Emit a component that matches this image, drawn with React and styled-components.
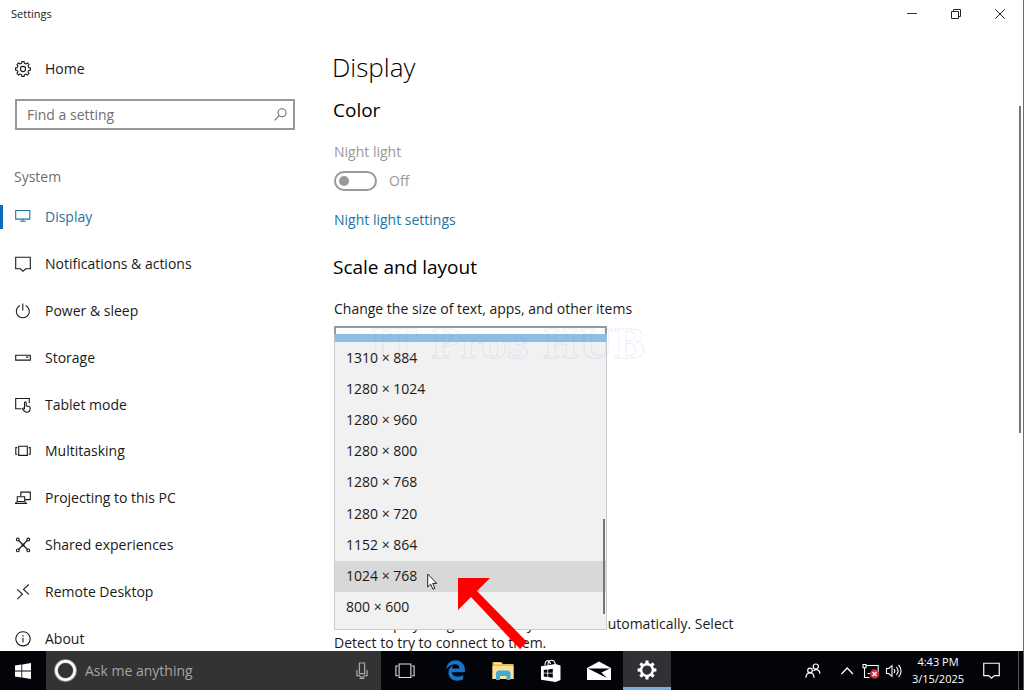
import React, { Fragment, useState } from 'react';
import styled, { createGlobalStyle } from 'styled-components';
import { FaEdgeLegacy } from 'react-icons/fa6';

const GlobalStyle = createGlobalStyle`
  * {
    box-sizing: border-box;
  }
  body {
    margin: 0;
    background-color: white;
    color: #1a1a1a;
    font-family: 'Open Sans', 'Noto Sans', sans-serif;
    font-size: 14px;
    line-height: 20px;
  }
  button, input, select {
    font: inherit;
    color: inherit;
  }
`
const Screen = styled.div`
  display: flex;
  flex-direction: column;
  height: 100vh;
  overflow: hidden;
`
const Window = styled.div`
  border-right: 1px solid #6e6e6e;
  display: flex;
  flex: 1;
  flex-direction: column;
  min-height: 0;
`
const TitleBar = styled.header`
  align-items: center;
  display: flex;
  flex: none;
  font-size: 11px;
  height: 28px;
  justify-content: space-between;
  padding: 0 1px 0 11px;
`
const WindowButtons = styled.div`
  display: flex;
  height: 100%;
`
const WindowButton = styled.button`
  background: none;
  border: none;
  display: grid;
  padding: 0;
  place-items: center;
  width: 44px;
`
const Body = styled.div`
  display: flex;
  flex: 1;
  min-height: 0;
`
const Sidebar = styled.aside`
  flex: none;
  overflow: hidden;
  padding-top: 17px;
  width: 310px;
`
const NavLink = styled.a`
  align-items: center;
  border-left: 3px solid transparent;
  color: ${props => props.$active ? '#24739f' : '#1a1a1a'};
  display: flex;
  gap: 14px;
  height: 47px;
  padding-left: 12px;
  position: relative;
  text-decoration: none;

  &::before {
    background-color: ${props => props.$active ? '#0f6cbd' : 'transparent'};
    content: '';
    height: 24px;
    left: -3px;
    position: absolute;
    width: 3px;
  }
`
const SearchBox = styled.label`
  align-items: center;
  border: 2px solid #999;
  color: #707070;
  display: flex;
  height: 31px;
  margin: 7px 15px 0;
  padding: 0 6px 0 10px;
`
const SearchInput = styled.input`
  background: none;
  border: none;
  flex: 1;
  min-width: 0;
  outline: none;
  padding: 0;

  &::placeholder {
    color: #707070;
    opacity: 1;
  }
`
const NavTitle = styled.h2`
  color: #707070;
  font-size: 14px;
  font-weight: 400;
  margin: 37px 0 7px 14px;
`
const NavList = styled.nav`
  display: grid;
  grid-template-rows: repeat(10, 1fr);
  height: 468px;

  ${NavLink} {
    height: auto;
  }
`
const Main = styled.main`
  flex: 1;
  min-width: 0;
  overflow: hidden;
  padding: 21px 0 0 24px;
`
const PageTitle = styled.h1`
  color: black;
  font-size: 26px;
  font-weight: 300;
  line-height: 36px;
  margin: 0 0 13px -2px;
`
const SectionTitle = styled.h2`
  color: black;
  font-size: 19px;
  font-weight: 400;
  line-height: 24px;
  margin: 0 0 20px -1px;
`
const Muted = styled.div`
  color: #999;
`
const ToggleRow = styled.label`
  align-items: center;
  color: #999;
  display: flex;
  gap: 12px;
  margin: 9px 0 19px;
`
const Toggle = styled.input`
  appearance: none;
  border: 2px solid #999;
  border-radius: 10px;
  display: flex;
  align-items: center;
  height: 20px;
  margin: 0;
  padding: 0 3px;
  width: 43px;

  &::before {
    background-color: #999;
    border-radius: 50%;
    content: '';
    height: 10px;
    width: 10px;
  }
`
const TextLink = styled.a`
  color: #24739f;
  display: block;
  margin-bottom: 25px;
  text-decoration: none;
`
const Field = styled.div`
  position: relative;
`
const FieldLabel = styled.label`
  display: block;
  margin-bottom: 7px;
`
const ScaleSelect = styled.select`
  appearance: none;
  background-color: white;
  border: 2px solid #999;
  border-radius: 0;
  display: block;
  height: 32px;
  width: 273px;
`
const Popup = styled.div`
  background-color: #f1f1f1;
  border: 1px solid #ccc;
  border-top: 8px solid #8ebee4;
  height: 296px;
  left: 0;
  position: absolute;
  top: 8px;
  width: 273px;
`
const Options = styled.div`
  display: grid;
  grid-template-rows: repeat(9, 1fr);
  height: 281px;
`
const Option = styled.button`
  background-color: ${props => props.$hover ? '#d8d8d8' : 'transparent'};
  border: none;
  padding: 0 11px;
  text-align: left;
`
const PopupScroll = styled.div`
  background-color: #777;
  bottom: 15px;
  height: 95px;
  position: absolute;
  right: 1px;
  width: 2px;
`
const Watermark = styled.div`
  color: transparent;
  font-family: 'DejaVu Serif', serif;
  font-size: 39px;
  font-weight: 700;
  left: 35px;
  line-height: 40px;
  pointer-events: none;
  position: absolute;
  top: -18px;
  white-space: nowrap;
  -webkit-text-stroke: 1px rgba(110, 110, 255, 0.14);
`
const Pointer = styled.svg`
  left: 92px;
  position: absolute;
  top: 231px;
`
const Arrow = styled.svg`
  left: 123px;
  position: absolute;
  top: 236px;
`
const Hint = styled.p`
  line-height: 19px;
  margin: 256px 0 0;
  max-width: 410px;
`
const PageScroll = styled.div`
  background-color: #777;
  flex: none;
  height: 327px;
  margin: 78px 2px 0 0;
  width: 2px;
`
const Taskbar = styled.footer`
  background-color: #02040a;
  color: white;
  display: flex;
  flex: none;
  height: 39px;
`
const TaskButton = styled.button`
  background-color: ${props => props.$active ? '#303137' : 'transparent'};
  border: none;
  border-bottom: ${props => props.$active ? '3px solid #76aee0' : 'none'};
  display: grid;
  flex: none;
  margin-right: ${props => props.$gap || 0}px;
  padding: ${props => props.$active ? '2px 0 0' : 0};
  place-items: center;
  width: ${props => props.$width || 48}px;
`
const CortanaBox = styled.label`
  align-items: center;
  background-color: #333;
  color: #a5a5a5;
  display: flex;
  flex: 0 1 335px;
  gap: 8px;
  padding: 0 11px 0 8px;

  ${SearchInput}::placeholder {
    color: #a5a5a5;
  }
`
const Tray = styled.div`
  display: flex;
  margin-left: auto;
`
const Clock = styled.time`
  font-size: 11px;
  line-height: 17px;
  padding-top: 2px;
  text-align: center;
  width: 64px;
`
const ShowDesktop = styled.div`
  border-left: 1px solid #555;
  border-right: 1px solid #555;
  margin-left: 6px;
  width: 6px;
`

// outline of a cog, alternating between the two radii for every tooth
const gearPath = (teeth, outer, inner) => {
  const step = (Math.PI * 2) / teeth;
  const points = [];
  for (let i = 0; i < teeth; i++) {
    const a = i * step - Math.PI / 2;
    [[-0.3, inner], [-0.2, outer], [0.2, outer], [0.3, inner]].forEach(([offset, r]) => {
      const t = a + offset * step;
      points.push(`${(8 + r * Math.cos(t)).toFixed(2)} ${(8 + r * Math.sin(t)).toFixed(2)}`);
    });
  }
  return `M${points.join('L')}Z`;
}

const Icon = ({ size = 16, children, width = 1.1 }) => (
  <svg
    width={size}
    height={size}
    viewBox="0 0 16 16"
    fill="none"
    stroke="currentColor"
    strokeWidth={width}
    aria-hidden="true"
  >
    {children}
  </svg>
)

const icons = {
  home: <Fragment><path d={gearPath(8, 7.5, 5.9)} strokeLinejoin="round" /><circle cx="8" cy="8" r="2.6" /></Fragment>,
  display: <path d="M.7 1.500h14.100v8.600H.7zM7.800 10v2M5 12.200h5.800" />,
  notifications: <path d="M.7 1.200h14.600v11.600h-4.600L8 15.200l-2.600-2.400H.7z" />,
  power: <path d="M7.800.5v7M4.900 2.400a6.500 6.500 0 1 0 5.800 0" />,
  storage: <path d="M.7 5.200h14.600v4.900H.7zM11 7.100h2.400" />,
  tablet: <Fragment><path d="M6.500 11.700H.7V1.500h13.600v4.700" /><path d="M9.500 11.500V5.800c0-1.400 1.700-1.400 1.700 0v3.100l2.900.6c.9.3 1.200.8 1.100 1.700-.1 2.300-1.300 4-3.300 4-2.100 0-3.200-1.200-4.400-3.500.5-1 1.300-.9 2-.2z" /></Fragment>,
  multitasking: <path d="M3.700 3.300h8.600v9.100H3.700zM2.300 4.600H.8v6.600h1.500M13.700 4.600h1.500v6.600h-1.500" />,
  projecting: <path d="M5.800 6V2.100h9.500v7.500h-5M2.300 6.800h7.400v4.800H2.300zM.4 13.500l1.600-1.800h7.900l1.500 1.800z" />,
  shared: <Fragment><path d="M3.800 3.500l8.700 9M12.300 3.500l-8.700 9" /><circle cx="2.800" cy="2.500" r="1.400" /><circle cx="13.300" cy="2.500" r="1.400" /><circle cx="2.800" cy="13.400" r="1.400" /><circle cx="13.300" cy="13.400" r="1.400" /><circle cx="8" cy="8" r="1" fill="currentColor" /></Fragment>,
  remote: <path d="M2.200 5.300l5.200 4.800-5 5M13.700.5L8.500 5.400l5.400 5" />,
  about: <path d="M8 .7a7.100 7.100 0 1 0 .01 0zM8 6.800v4.800M8 4.100v1.300" />,
}

const navItems = [
  ['display', 'Display'],
  ['notifications', 'Notifications & actions'],
  ['power', 'Power & sleep'],
  ['storage', 'Storage'],
  ['tablet', 'Tablet mode'],
  ['multitasking', 'Multitasking'],
  ['projecting', 'Projecting to this PC'],
  ['shared', 'Shared experiences'],
  ['remote', 'Remote Desktop'],
  ['about', 'About'],
];

const resolutions = [
  '1310 × 884',
  '1280 × 1024',
  '1280 × 960',
  '1280 × 800',
  '1280 × 768',
  '1280 × 720',
  '1152 × 864',
  '1024 × 768',
  '800 × 600',
];

const SettingsTaskbar = () => (
  <Taskbar>
    <TaskButton $width={46} aria-label="Start">
      <svg width="16" height="16" viewBox="0 0 16 16" fill="white">
        <path d="M0 2.400L6.400 1.500v6H0zM7.200 1.400L16 0v7.500H7.200zM0 8.400h6.400v6L0 13.500zM7.200 8.400H16V16l-8.800-1.400z" />
      </svg>
    </TaskButton>
    <CortanaBox>
      <svg width="23" height="23" viewBox="0 0 23 23" fill="none">
        <circle cx="11.500" cy="11.500" r="9.400" stroke="#aaa" strokeWidth="3.800" />
        <circle cx="11.500" cy="11.500" r="9.200" stroke="white" strokeWidth="2.400" />
      </svg>
      <SearchInput type="text" aria-label="Search" placeholder="Ask me anything" />
      <svg width="16" height="18" viewBox="0 0 16 18" fill="none" stroke="#aaa" strokeWidth="1.200">
        <path d="M5.400 1h5.200v10.700H5.400zM2.900 8v5.600h2.500l1.300 1.500h2.600l1.300-1.500h2.500V8M5.500 16.500h5" />
      </svg>
    </CortanaBox>
    <TaskButton $gap={2} aria-label="Task view">
      <svg width="20" height="18" viewBox="0 0 20 18" fill="none" stroke="#ddd" strokeWidth="1.100">
        <path d="M4.100 2h11.800v13.500H4.100zM3 4H.9v9.800H3M17 4h2.100v9.800H17" />
      </svg>
    </TaskButton>
    <TaskButton aria-label="Edge"><FaEdgeLegacy size={21} color="#1673c8" /></TaskButton>
    <TaskButton aria-label="File Explorer">
      <svg width="22" height="20" viewBox="0 0 22 20">
        <path d="M.5 1h9l1.500 2h10.500v15H.5z" fill="#e9bd50" />
        <path d="M.5 5h21v13H.5z" fill="#fbe29a" />
        <path d="M2.500 2h6v1.200h-6z" fill="#fff2c4" />
        <path d="M4 19v-7.500L6 9.500h10.500l2 2V19h-4v-4h-6.500v4z" fill="#44a9cf" />
      </svg>
    </TaskButton>
    <TaskButton aria-label="Store">
      <svg width="22" height="24" viewBox="0 0 22 24">
        <path d="M5 6.500C5 .5 9 .2 10.500 5M8 6c0-6 6.500-6.500 7.500 0" fill="none" stroke="white" strokeWidth="1.100" />
        <path d="M1 7.200L15.500 5v18L1 20.800zM15.500 5l5 1.500V21l-5 2z" fill="white" />
        <path d="M3.800 11l3.600-.5v3.300H3.800zM8.200 10.400l4.600-.7v4.100H8.200zM3.800 14.600h3.600v3.300l-3.600-.5zM8.200 14.600h4.600v4.200l-4.600-.7z" fill="#02040a" />
      </svg>
    </TaskButton>
    <TaskButton aria-label="Mail">
      <svg width="24" height="20" viewBox="0 0 24 20">
        <path d="M0 7L12 .5 24 7v12H0z" fill="white" />
        <path d="M1 7.500h22l-8.600 4L20 17 1 7.500z" fill="#02040a" />
      </svg>
    </TaskButton>
    <TaskButton $active aria-label="Settings">
      <svg width="20" height="20" viewBox="0 0 16 16">
        <path d={`${gearPath(8, 7.6, 5.7)}M8 4.300a3.700 3.700 0 1 0 .01 0z`} fill="white" fillRule="evenodd" />
      </svg>
    </TaskButton>
    <Tray>
      <TaskButton $width={28} $gap={9} aria-label="People">
        <Icon width={1.2}>
          <circle cx="10.800" cy="3.600" r="2.600" />
          <circle cx="5" cy="7.400" r="2.300" />
          <path d="M1 14.800c0-6.600 8-6.600 8 0M8.500 7.800c2.700-2.600 6.500-.8 6.500 3" />
        </Icon>
      </TaskButton>
      <TaskButton $width={22} $gap={2} aria-label="Show hidden icons">
        <Icon width={1.3}><path d="M2.500 11L8.200 5l5.700 6" /></Icon>
      </TaskButton>
      <TaskButton $width={22} $gap={1} aria-label="Network">
        <svg width="18" height="16" viewBox="0 0 18 16" fill="none" stroke="white" strokeWidth="1.100">
          <path d="M4.500 2.500h11.700v8H5.500M1 1.500h3v3.300H1zM2.500 5v9.500h5" />
          <circle cx="12.500" cy="11" r="4.700" fill="#cf2f3c" stroke="none" />
          <path d="M10.500 9l4 4M14.500 9l-4 4" strokeWidth="1.400" />
        </svg>
      </TaskButton>
      <TaskButton $width={22} $gap={1} aria-label="Volume">
        <svg width="18" height="16" viewBox="0 0 18 16" fill="none" stroke="white" strokeWidth="1.100">
          <path d="M1.500 5.500h2.300L7 2.700v10.600l-3.200-2.800H1.500zM9 6c1 1.200 1 2.800 0 4M11.300 4c2.200 2.400 2.200 5.600 0 8M13.600 2c3.300 3.500 3.300 8.500 0 12" />
        </svg>
      </TaskButton>
      <Clock>4:43 PM<br />3/15/2025</Clock>
      <TaskButton $width={42} aria-label="Action center"><Icon size={17}>{icons.notifications}</Icon></TaskButton>
      <ShowDesktop />
    </Tray>
  </Taskbar>
)

const App = () => {
  const [hovered, setHovered] = useState('1024 × 768');

  return (
    <Screen>
      <GlobalStyle />
      <Window>
        <TitleBar>
          <span>Settings</span>
          <WindowButtons>
            <WindowButton aria-label="Minimize">
              <svg width="10" height="10" viewBox="0 0 10 10" stroke="#333"><path d="M0 4.500h10" /></svg>
            </WindowButton>
            <WindowButton aria-label="Restore">
              <svg width="10" height="10" viewBox="0 0 10 10" fill="none" stroke="#222"><path d="M.5 2.500h7v7h-7zM2.500 2V.5h7v7H8" /></svg>
            </WindowButton>
            <WindowButton aria-label="Close">
              <svg width="10" height="10" viewBox="0 0 10 10" stroke="#222"><path d="M.3.3l9.400 9.400M9.700.3L.3 9.700" /></svg>
            </WindowButton>
          </WindowButtons>
        </TitleBar>
        <Body>
          <Sidebar>
            <NavLink href="#home"><Icon>{icons.home}</Icon>Home</NavLink>
            <SearchBox>
              <SearchInput type="text" aria-label="Find a setting" placeholder="Find a setting" />
              <svg width="13" height="13" viewBox="0 0 13 13" fill="none" stroke="currentColor" strokeWidth="1.100">
                <circle cx="8" cy="4.800" r="4" />
                <path d="M5.200 7.700L.5 12.400" />
              </svg>
            </SearchBox>
            <NavTitle>System</NavTitle>
            <NavList>
              { navItems.map(([id, label]) => (
                <NavLink key={id} href={`#${id}`} $active={id === 'display'}>
                  <Icon>{icons[id]}</Icon>
                  {label}
                </NavLink>
              )) }
            </NavList>
          </Sidebar>
          <Main>
            <PageTitle>Display</PageTitle>
            <SectionTitle>Color</SectionTitle>
            <Muted>Night light</Muted>
            <ToggleRow>
              <Toggle type="checkbox" role="switch" disabled />
              Off
            </ToggleRow>
            <TextLink href="#night-light">Night light settings</TextLink>
            <SectionTitle>Scale and layout</SectionTitle>
            <FieldLabel htmlFor="scale">Change the size of text, apps, and other items</FieldLabel>
            <Field>
              <ScaleSelect id="scale" />
              <Popup>
                <Options role="listbox" aria-label="Resolution">
                  { resolutions.map(item => (
                    <Option
                      key={item}
                      role="option"
                      aria-selected={item === hovered}
                      $hover={item === hovered}
                      onMouseEnter={() => setHovered(item)}
                    >
                      {item}
                    </Option>
                  )) }
                </Options>
                <PopupScroll />
                <Watermark>IT Pros HUB</Watermark>
                <Pointer width="11" height="18" viewBox="0 0 11 18">
                  <path d="M.7 1v13l3-2.800 2.200 5 2-.9-2.200-4.900h4.100z" fill="white" stroke="#222" strokeWidth="1" />
                </Pointer>
                <Arrow width="69" height="71" viewBox="0 0 69 71">
                  <path d="M0 0h32L19 13l50 51-7 7-49-52L0 32z" fill="red" />
                </Arrow>
              </Popup>
            </Field>
            <Hint>Older displays might not always connect automatically. Select Detect to try to connect to them.</Hint>
          </Main>
          <PageScroll />
        </Body>
      </Window>
      <SettingsTaskbar />
    </Screen>
  );
}

export default App;
